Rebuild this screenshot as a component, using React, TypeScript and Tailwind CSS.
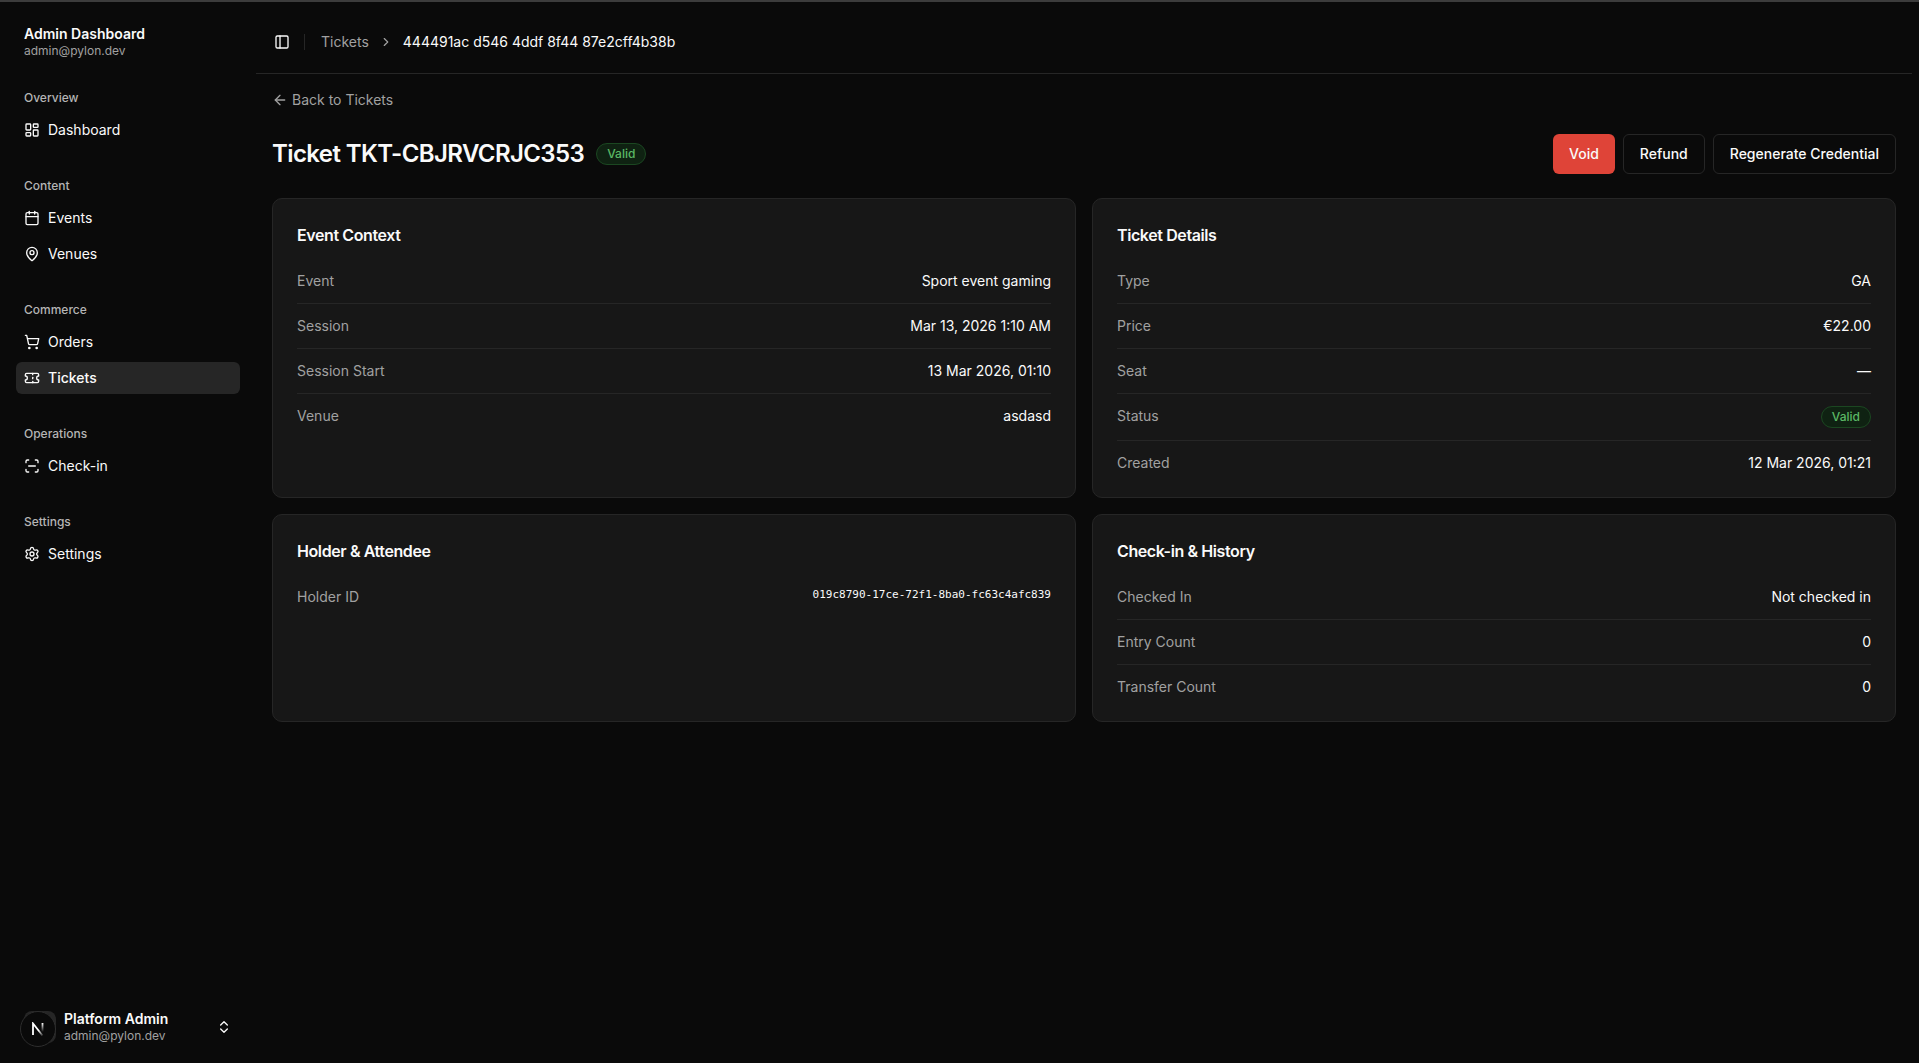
import {
  ArrowLeft,
  Calendar,
  ChevronRight,
  ChevronsUpDown,
  LayoutDashboard,
  MapPin,
  PanelLeft,
  ScanLine,
  Settings,
  ShoppingCart,
  Ticket,
  type LucideIcon,
} from "lucide-react";
import clsx from "clsx";
import React, { ReactNode } from "react";

interface NavItem {
  label: string;
  icon: LucideIcon;
  href: string;
}

interface NavGroup {
  title: string;
  items: NavItem[];
}

const NAV_GROUPS: NavGroup[] = [
  { title: "Overview", items: [{ label: "Dashboard", icon: LayoutDashboard, href: "#dashboard" }] },
  {
    title: "Content",
    items: [
      { label: "Events", icon: Calendar, href: "#events" },
      { label: "Venues", icon: MapPin, href: "#venues" },
    ],
  },
  {
    title: "Commerce",
    items: [
      { label: "Orders", icon: ShoppingCart, href: "#orders" },
      { label: "Tickets", icon: Ticket, href: "#tickets" },
    ],
  },
  { title: "Operations", items: [{ label: "Check-in", icon: ScanLine, href: "#check-in" }] },
  { title: "Settings", items: [{ label: "Settings", icon: Settings, href: "#settings" }] },
];

const ACTIVE_HREF = "#tickets";

function StatusBadge({ children }: { children: ReactNode }) {
  return (
    <span className="inline-flex items-center rounded-full border border-[#1b4721] bg-[#0f2212] px-2.5 py-0.5 text-xs font-medium text-[#5bb865]">
      {children}
    </span>
  );
}

function SidebarLink({ item }: { item: NavItem }) {
  const isActive = item.href === ACTIVE_HREF;
  const Icon = item.icon;

  return (
    <li>
      <a
        href={item.href}
        aria-current={isActive ? "page" : undefined}
        className={clsx(
          "flex h-8 items-center gap-2 rounded-md p-2 text-sm",
          isActive && "bg-[#262626] font-medium"
        )}
      >
        <Icon className="size-4 shrink-0" />
        <span>{item.label}</span>
      </a>
    </li>
  );
}

// round dev tools button, floats over the user's avatar
function DevToolsButton() {
  return (
    <button
      type="button"
      aria-label="Open dev tools"
      className="fixed bottom-4 left-5 flex size-9 items-center justify-center rounded-full border border-[#2e2e2e] bg-[#0a0a0a]"
    >
      <svg width="14" height="14" viewBox="0 0 14 14" fill="none">
        <defs>
          <linearGradient id="n-diagonal" x1="8" y1="8" x2="13" y2="14" gradientUnits="userSpaceOnUse">
            <stop stopColor="#fff" />
            <stop offset="1" stopColor="#fff" stopOpacity="0" />
          </linearGradient>
          <linearGradient id="n-stem" x1="11" y1="1" x2="11" y2="10" gradientUnits="userSpaceOnUse">
            <stop stopColor="#fff" />
            <stop offset="1" stopColor="#fff" stopOpacity="0" />
          </linearGradient>
        </defs>
        <path d="M2 13V1.5L11.5 13.5" stroke="url(#n-diagonal)" strokeWidth="1.8" />
        <path d="M11.5 1V10" stroke="url(#n-stem)" strokeWidth="1.8" />
      </svg>
    </button>
  );
}

function Sidebar() {
  return (
    <aside className="flex w-64 shrink-0 flex-col p-2">
      <div className="p-2">
        <div className="grid h-12 content-center px-2">
          <span className="truncate text-sm leading-tight font-semibold">Admin Dashboard</span>
          <span className="truncate text-xs text-[#a1a1a1]">admin@pylon.dev</span>
        </div>
      </div>
      <nav className="flex flex-1 flex-col gap-2">
        {NAV_GROUPS.map((group) => (
          <section key={group.title} className="p-2">
            <h2 className="flex h-8 items-center px-2 text-xs font-medium text-[#b5b5b5]">
              {group.title}
            </h2>
            <ul className="flex flex-col gap-1">
              {group.items.map((item) => (
                <SidebarLink key={item.href} item={item} />
              ))}
            </ul>
          </section>
        ))}
      </nav>
      <div className="px-2 pb-1">
        <button type="button" className="flex h-12 w-full items-center gap-2 p-2 text-left">
          <span className="size-8 shrink-0 rounded-lg bg-[#262626]" />
          <span className="grid flex-1">
            <span className="truncate text-sm leading-tight font-semibold">Platform Admin</span>
            <span className="truncate text-xs text-[#a1a1a1]">admin@pylon.dev</span>
          </span>
          <ChevronsUpDown className="size-4" />
        </button>
      </div>
    </aside>
  );
}

function PageHeader() {
  return (
    <header className="flex h-16 items-center border-b border-[#262626] px-3">
      <button type="button" aria-label="Toggle sidebar" className="flex size-7 items-center justify-center">
        <PanelLeft className="size-4" />
      </button>
      <div className="mr-4 ml-2 h-4 w-px bg-[#262626]" />
      <nav aria-label="Breadcrumb">
        <ol className="flex items-center gap-2.5 text-sm">
          <li>
            <a href="#tickets" className="text-[#a1a1a1]">
              Tickets
            </a>
          </li>
          <li aria-hidden="true">
            <ChevronRight className="size-3.5 text-[#a1a1a1]" />
          </li>
          <li aria-current="page">444491ac d546 4ddf 8f44 87e2cff4b38b</li>
        </ol>
      </nav>
    </header>
  );
}

function DetailCard({ title, children }: { title: string; children: ReactNode }) {
  return (
    <section className="rounded-[10px] border border-[#262626] bg-[#171717] px-6 pt-6 pb-3">
      <h2 className="mb-3 text-base font-semibold tracking-tight">{title}</h2>
      <dl>{children}</dl>
    </section>
  );
}

function DetailRow({ label, children }: { label: string; children: ReactNode }) {
  return (
    <div className="flex items-start justify-between gap-4 border-b border-[#262626] py-3 text-sm last:border-b-0">
      <dt className="text-[#a1a1a1]">{label}</dt>
      <dd className="flex text-right">{children}</dd>
    </div>
  );
}

export default function App() {
  return (
    <div className="flex min-h-screen border-t-2 border-[#3c3c3c] bg-[#0a0a0a] font-['Inter',sans-serif] text-[#fafafa]">
      <Sidebar />
      <div className="my-2 mr-[7px] min-w-0 flex-1">
        <PageHeader />
        <main className="px-4 pt-4">
          <a href="#tickets" className="flex w-fit items-center gap-1 text-sm text-[#a1a1a1]">
            <ArrowLeft className="size-4" />
            Back to Tickets
          </a>
          <div className="mt-6 flex items-center justify-between gap-4">
            <div className="flex items-center gap-3">
              <h1 className="text-2xl font-semibold tracking-tight">Ticket TKT-CBJRVCRJC353</h1>
              <StatusBadge>Valid</StatusBadge>
            </div>
            <div className="flex gap-2 text-sm font-medium">
              <button type="button" className="h-10 rounded-md bg-[#df4438] px-4">
                Void
              </button>
              <button type="button" className="h-10 rounded-md border border-[#262626] px-4">
                Refund
              </button>
              <button type="button" className="h-10 rounded-md border border-[#262626] px-4">
                Regenerate Credential
              </button>
            </div>
          </div>
          <div className="mt-6 grid grid-cols-2 gap-4">
            <DetailCard title="Event Context">
              <DetailRow label="Event">Sport event gaming</DetailRow>
              <DetailRow label="Session">Mar 13, 2026 1:10 AM</DetailRow>
              <DetailRow label="Session Start">13 Mar 2026, 01:10</DetailRow>
              <DetailRow label="Venue">asdasd</DetailRow>
            </DetailCard>
            <DetailCard title="Ticket Details">
              <DetailRow label="Type">GA</DetailRow>
              <DetailRow label="Price">€22.00</DetailRow>
              <DetailRow label="Seat">—</DetailRow>
              <DetailRow label="Status">
                <StatusBadge>Valid</StatusBadge>
              </DetailRow>
              <DetailRow label="Created">12 Mar 2026, 01:21</DetailRow>
            </DetailCard>
            <DetailCard title="Holder & Attendee">
              <DetailRow label="Holder ID">
                <span className="font-['DejaVu_Sans_Mono',monospace] text-[11px] leading-4">
                  019c8790-17ce-72f1-8ba0-fc63c4afc839
                </span>
              </DetailRow>
            </DetailCard>
            <DetailCard title="Check-in & History">
              <DetailRow label="Checked In">Not checked in</DetailRow>
              <DetailRow label="Entry Count">0</DetailRow>
              <DetailRow label="Transfer Count">0</DetailRow>
            </DetailCard>
          </div>
        </main>
      </div>
      <DevToolsButton />
    </div>
  );
}
